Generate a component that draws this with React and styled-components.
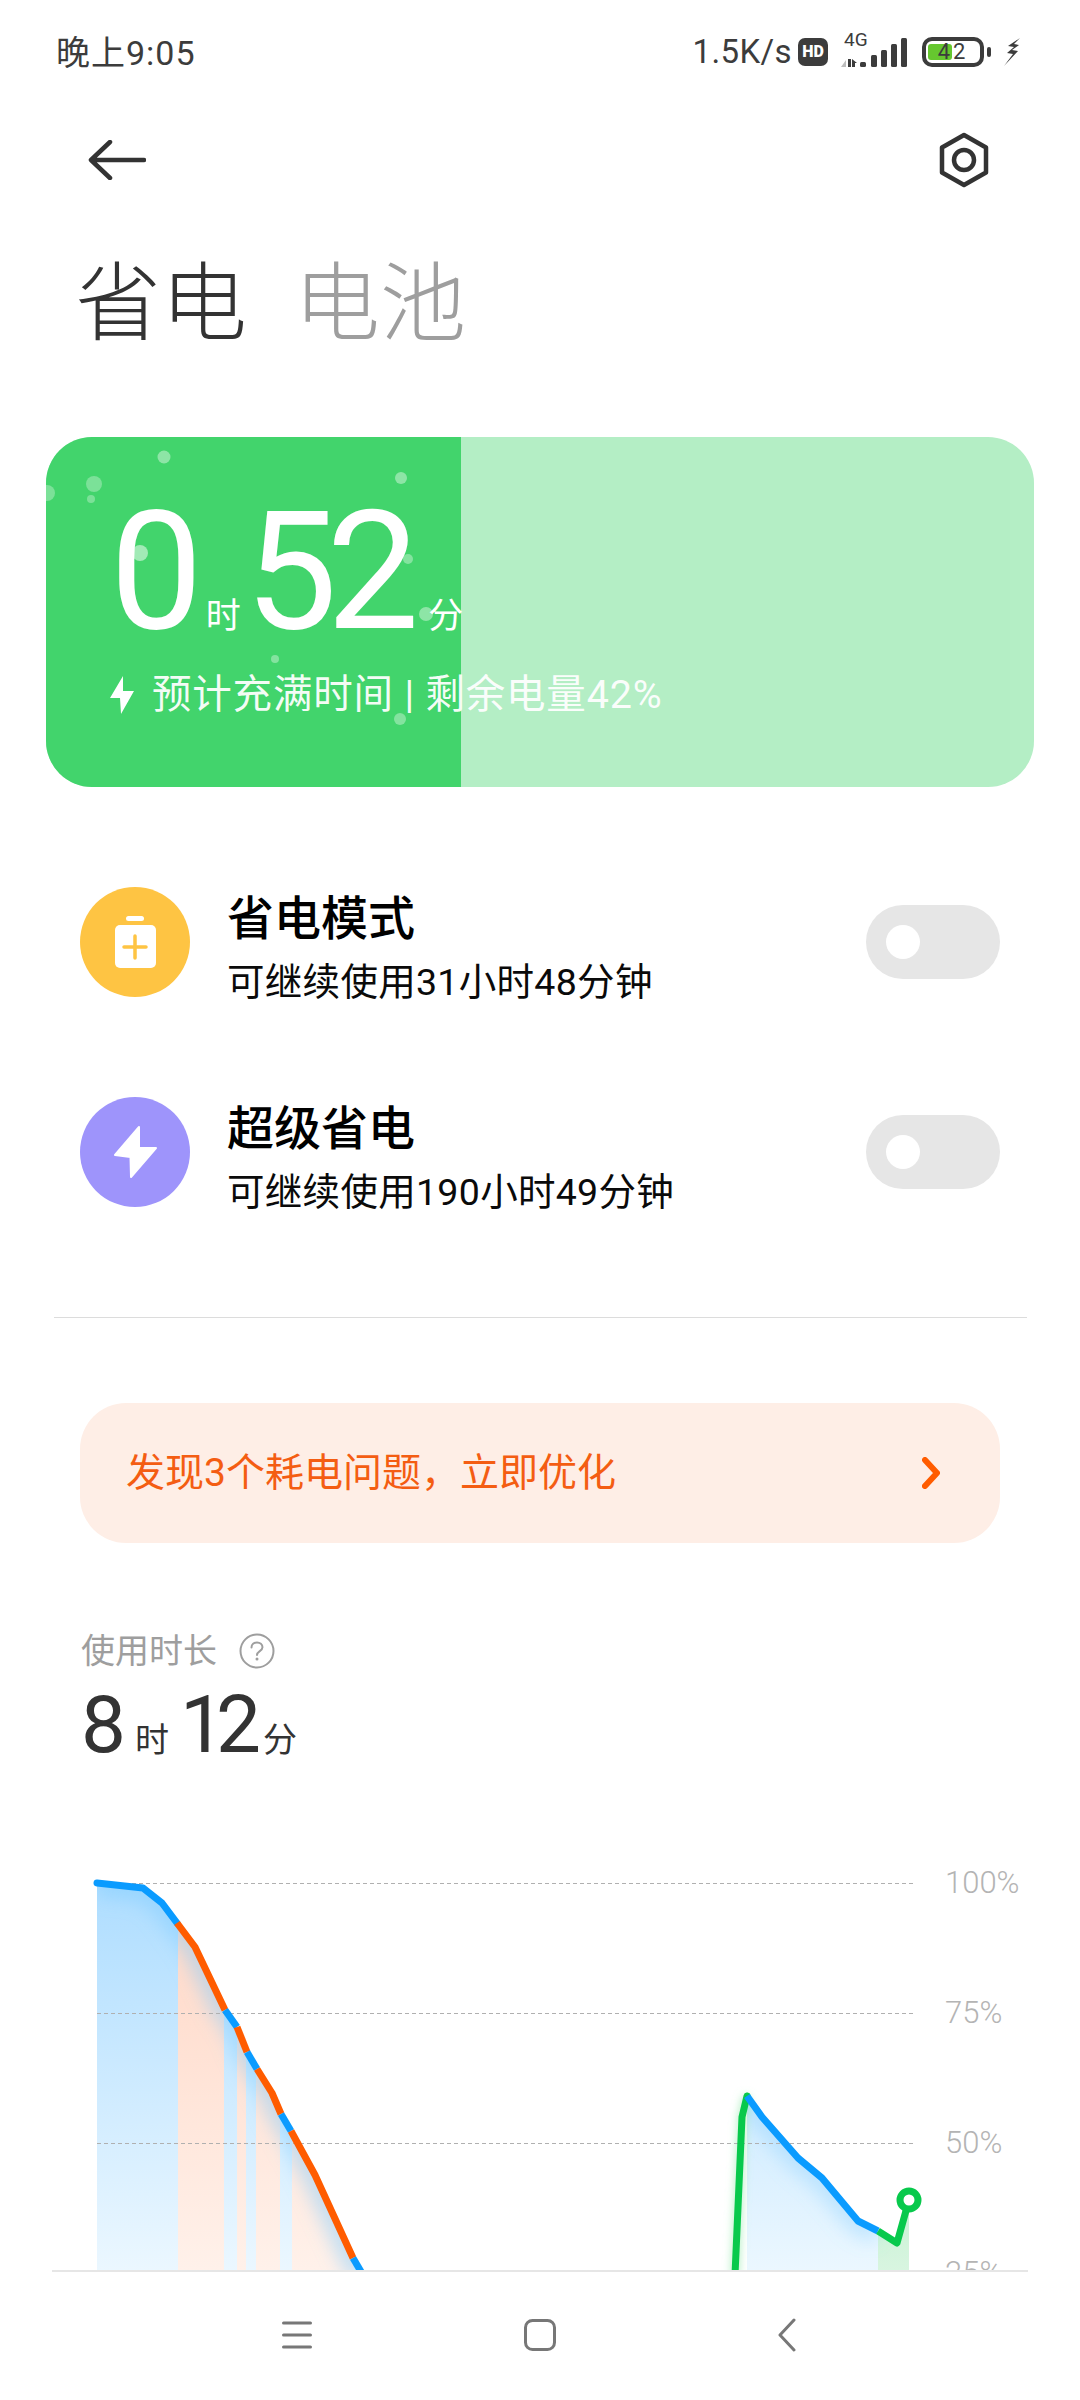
import React from 'react';
import styled, { createGlobalStyle } from 'styled-components';

const GlobalStyle = createGlobalStyle`
  html, body {
    margin: 0;
    padding: 0;
    background: #ffffff;
  }
  body {
    font-family: Roboto, "Noto Sans CJK SC", sans-serif;
  }
`;

const Page = styled.div`
  width: 1080px;
  height: 2400px;
  display: flex;
  flex-direction: column;
  overflow: hidden;
  background: #ffffff;
`;

const StatusBar = styled.div`
  height: 104px;
  flex: none;
  padding: 0 59px 0 56px;
  box-sizing: border-box;
  display: flex;
  align-items: center;
  justify-content: space-between;
  color: #3c3c3c;
`;

const StatusTime = styled.div`
  font-size: 34px;
  line-height: 40px;
  letter-spacing: 1px;
  padding-top: 2px;
`;

const StatusRight = styled.div`
  display: flex;
  align-items: center;
`;

const Speed = styled.span`
  font-size: 33px;
  line-height: 40px;
  letter-spacing: 0.4px;
`;

const HdBadge = styled.span`
  width: 30px;
  height: 28px;
  margin-left: 6px;
  border-radius: 7px;
  background: #3c3c3c;
  color: #ffffff;
  font-size: 16px;
  font-weight: 900;
  line-height: 28px;
  text-align: center;
`;

const Signal = styled.div`
  position: relative;
  width: 70px;
  height: 36px;
  margin: -6px 0 0 12px;
`;

const NetLabel = styled.span`
  position: absolute;
  left: 4px;
  top: -1px;
  font-size: 19px;
  line-height: 20px;
`;

const Battery = styled.div`
  position: relative;
  width: 62px;
  height: 30px;
  margin-left: 12px;
  box-sizing: border-box;
  border: 4px solid #3c3c3c;
  border-radius: 10px;
  display: flex;
  align-items: center;
  justify-content: center;

  &::after {
    content: '';
    position: absolute;
    right: -11px;
    top: 6px;
    width: 4px;
    height: 10px;
    border-radius: 2px;
    background: #3c3c3c;
  }
`;

const BatteryFill = styled.div`
  position: absolute;
  left: 2px;
  top: 3px;
  bottom: 3px;
  width: 24px;
  border-radius: 3px;
  background: #66c72f;
`;

const BatteryText = styled.span`
  position: relative;
  font-size: 22px;
  line-height: 22px;
  letter-spacing: 3px;
`;

const ChargeIcon = styled.svg`
  margin-left: 20px;
  display: block;
`;

const TopBar = styled.div`
  height: 112px;
  flex: none;
  padding: 0 90px 0 88px;
  display: flex;
  align-items: center;
  justify-content: space-between;
`;

const Tabs = styled.div`
  margin-top: 43px;
  padding-left: 75px;
  display: flex;
  gap: 47px;
  flex: none;
`;

const Tab = styled.div`
  font-size: 86px;
  line-height: 92px;
  font-weight: 300;
  color: ${(p) => (p.$active ? '#333333' : '#9e9e9e')};
`;

const ChargeCard = styled.div`
  position: relative;
  height: 350px;
  margin: 86px 46px 0;
  flex: none;
  border-radius: 46px;
  overflow: hidden;
  background: #b4eec5;
  color: #ffffff;
`;

const ChargeFill = styled.div`
  position: absolute;
  left: 0;
  top: 0;
  bottom: 0;
  width: 415px;
  background: #42d46c;
`;

const Bubbles = styled.svg`
  position: absolute;
  left: 0;
  top: 0;
`;

const ChargeContent = styled.div`
  position: relative;
  padding: 60px 0 0 64px;
  display: flex;
  flex-direction: column;
`;

const BigTime = styled.div`
  display: flex;
  align-items: baseline;
  height: 150px;
`;

const BigNumber = styled.span`
  font-size: 165px;
  line-height: 150px;
  letter-spacing: -11px;
`;

const BigUnit = styled.span`
  font-size: 35px;
  line-height: 40px;
  margin: 0 ${(p) => p.$right}px 0 ${(p) => p.$left}px;
`;

const ChargeInfo = styled.div`
  margin-top: 25px;
  display: flex;
  align-items: center;
  font-size: 39.5px;
  line-height: 46px;
  letter-spacing: 0.8px;
  white-space: nowrap;
  color: rgba(255, 255, 255, 0.95);
`;

const InfoBolt = styled.svg`
  margin-right: 18px;
  display: block;
`;

const ModeList = styled.div`
  margin-top: 50px;
  flex: none;
`;

const ModeRow = styled.div`
  height: 210px;
  padding: 0 80px;
  display: flex;
  align-items: center;
`;

const ModeIcon = styled.div`
  width: 110px;
  height: 110px;
  flex: none;
  border-radius: 50%;
  background: ${(p) => p.$color};
`;

const ModeText = styled.div`
  margin-left: 37px;
  padding-top: 12px;
  flex: 1;
`;

const ModeTitle = styled.div`
  font-size: 47px;
  line-height: 56px;
  font-weight: 500;
  color: #000000;
`;

const ModeSub = styled.div`
  margin-top: 12px;
  font-size: 37.5px;
  line-height: 46px;
  letter-spacing: 0.3px;
  color: #0a0a0a;
`;

const Toggle = styled.div`
  width: 134px;
  height: 74px;
  flex: none;
  border-radius: 37px;
  background: #e6e6e6;
  display: flex;
  align-items: center;
  padding-left: 20px;
  box-sizing: border-box;

  &::before {
    content: '';
    width: 34px;
    height: 34px;
    border-radius: 50%;
    background: #ffffff;
  }
`;

const Divider = styled.div`
  height: 1px;
  margin: 60px 53px 0 54px;
  flex: none;
  background: #dcdcdc;
`;

const AlertBar = styled.div`
  height: 140px;
  margin: 85px 80px 0;
  padding: 0 60px 0 46px;
  flex: none;
  border-radius: 46px;
  background: #feeee6;
  color: #f45d12;
  display: flex;
  align-items: center;
  justify-content: space-between;
  font-size: 39px;
  line-height: 46px;
`;

const UsageBlock = styled.div`
  margin-top: 86px;
  padding-left: 81px;
  flex: none;
`;

const UsageLabel = styled.div`
  display: flex;
  align-items: center;
  gap: 22px;
  font-size: 34px;
  line-height: 44px;
  color: #9e9e9e;
`;

const UsageTime = styled.div`
  margin-top: 16px;
  display: flex;
  align-items: baseline;
  color: #333333;
  height: 72px;
`;

const UsageNumber = styled.span`
  font-size: 80px;
  line-height: 72px;
  letter-spacing: -9px;
`;

const UsageUnit = styled.span`
  font-size: 34px;
  line-height: 40px;
  margin: 0 ${(p) => p.$right}px 0 ${(p) => p.$left}px;
`;

const ChartWrap = styled.div`
  flex: 1;
  min-height: 0;
  overflow: hidden;
  display: flex;
  margin-top: 102px;
`;

const ChartSvg = styled.svg`
  display: block;
  flex: none;
`;

const AxisLabels = styled.div`
  margin: 0 0 0 15px;
  display: flex;
  flex-direction: column;
  gap: 90px;
  font-size: 31px;
  line-height: 40px;
  font-weight: 300;
  color: #b4b4b4;
`;

const BottomNav = styled.div`
  height: 130px;
  flex: none;
  position: relative;
  display: flex;
  align-items: center;
  padding-left: 282px;
  gap: 212px;
  box-sizing: border-box;

  &::before {
    content: '';
    position: absolute;
    left: 52px;
    right: 52px;
    top: 0;
    height: 2px;
    background: #e6e6e6;
  }
`;

const NavIcon = styled.svg`
  display: block;
  flex: none;
  margin-left: ${(p) => p.$shift || 0}px;
`;

const BLUE = '#0a9bff';
const ORANGE = '#ff5c00';
const GREEN = '#08c94c';

// y of the chart svg starts at 1863 on the page
const Y0 = 1863;
const pt = (x, y) => `${x},${y - Y0}`;

const segments = [
  { color: BLUE, points: [[97, 1883], [143, 1888], [162, 1903], [177, 1923]] },
  { color: ORANGE, points: [[177, 1923], [195, 1947], [225, 2010]] },
  { color: BLUE, points: [[225, 2010], [237, 2027]] },
  { color: ORANGE, points: [[237, 2027], [247, 2052]] },
  { color: BLUE, points: [[247, 2052], [257, 2069]] },
  { color: ORANGE, points: [[257, 2069], [272, 2093], [281, 2114]] },
  { color: BLUE, points: [[281, 2114], [291, 2131]] },
  { color: ORANGE, points: [[291, 2131], [315, 2175], [353, 2258]] },
  { color: BLUE, points: [[353, 2258], [363, 2275]] },
  { color: GREEN, points: [[735, 2275], [742, 2117], [747, 2096]] },
  { color: BLUE, points: [[747, 2096], [762, 2117], [798, 2158], [822, 2178], [858, 2221], [878, 2231]] },
  { color: GREEN, points: [[878, 2231], [897, 2243], [909, 2200]] },
];

const bands = [
  [97, 178, 'blue'],
  [178, 224, 'orange'],
  [224, 237, 'blue'],
  [237, 246, 'orange'],
  [246, 256, 'blue'],
  [256, 280, 'orange'],
  [280, 292, 'blue'],
  [292, 353, 'orange'],
  [353, 363, 'blue'],
  [747, 878, 'blue'],
  [878, 909, 'green'],
];

const curveOne = segments.slice(0, 9).flatMap((s) => s.points);
const curveTwo = segments.slice(10, 12).flatMap((s) => s.points);
const areaOne = [...curveOne, [363, 2275], [97, 2275]].map((p) => pt(p[0], p[1])).join(' ');
const areaTwo = [[747, 2275], ...curveTwo, [909, 2275]].map((p) => pt(p[0], p[1])).join(' ');
const polyline = (points) => points.map((p) => pt(p[0], p[1])).join(' ');

const UsageChart = () => (
  <ChartSvg width="930" height="407" viewBox="0 0 930 407">
    <defs>
      <linearGradient id="fillBlue" gradientUnits="userSpaceOnUse" x1="0" y1="20" x2="0" y2="407">
        <stop offset="0" stopColor="#aeddff" />
        <stop offset="1" stopColor="#ebf7ff" />
      </linearGradient>
      <linearGradient id="fillOrange" gradientUnits="userSpaceOnUse" x1="0" y1="20" x2="0" y2="407">
        <stop offset="0" stopColor="#ffd6c4" />
        <stop offset="1" stopColor="#fff1ea" />
      </linearGradient>
      <linearGradient id="fillGreen" gradientUnits="userSpaceOnUse" x1="0" y1="340" x2="0" y2="407">
        <stop offset="0" stopColor="#c8f2d4" />
        <stop offset="1" stopColor="#d8f5e0" />
      </linearGradient>
      <clipPath id="underOne"><polygon points={areaOne} /></clipPath>
      <clipPath id="underTwo"><polygon points={areaTwo} /></clipPath>
      <filter id="soft" x="-20%" y="-20%" width="140%" height="140%">
        <feGaussianBlur stdDeviation="9" />
      </filter>
      <filter id="glow" x="-200%" y="-20%" width="500%" height="140%">
        <feGaussianBlur stdDeviation="4" />
      </filter>
    </defs>

    <g clipPath="url(#underOne)">
      {bands.slice(0, 9).map(([a, b, kind]) => (
        <rect key={a} x={a} y="0" width={b - a} height="407" fill={kind === 'blue' ? 'url(#fillBlue)' : 'url(#fillOrange)'} />
      ))}
      <polyline points={polyline(curveOne)} fill="none" stroke="#7ccbff" strokeOpacity="0.45" strokeWidth="26" filter="url(#soft)" />
    </g>
    <g clipPath="url(#underTwo)">
      {bands.slice(9).map(([a, b, kind]) => (
        <rect key={a} x={a} y="0" width={b - a} height="407" fill={kind === 'blue' ? 'url(#fillBlue)' : 'url(#fillGreen)'} />
      ))}
      <polyline points={polyline(segments[10].points)} fill="none" stroke="#7ccbff" strokeOpacity="0.35" strokeWidth="26" filter="url(#soft)" />
    </g>
    <polyline points={polyline(segments[9].points)} fill="none" stroke="#8fe8a8" strokeOpacity="0.7" strokeWidth="8" filter="url(#glow)" />

    {[1883, 2013, 2143].map((y) => (
      <line key={y} x1="97" x2="913" y1={y - Y0 + 0.5} y2={y - Y0 + 0.5} stroke="#b0b0b0" strokeWidth="1" strokeDasharray="4 3" />
    ))}

    {segments.map((s, i) => (
      <polyline
        key={i}
        points={polyline(s.points)}
        fill="none"
        stroke={s.color}
        strokeWidth="7"
        strokeLinejoin="round"
        strokeLinecap={i === 0 || i === 9 ? 'round' : 'butt'}
      />
    ))}
    <circle cx="909" cy={2200 - Y0} r="9" fill="#ffffff" stroke={GREEN} strokeWidth="7" />
  </ChartSvg>
);

const signalBars = [
  [20, 31, 5],
  [31, 24, 12],
  [41, 19, 17],
  [51, 13, 23],
  [61, 7, 29],
];

const App = () => (
  <Page>
    <GlobalStyle />
    <StatusBar>
      <StatusTime>晚上9:05</StatusTime>
      <StatusRight>
        <Speed>1.5K/s</Speed>
        <HdBadge>HD</HdBadge>
        <Signal>
          <NetLabel>4G</NetLabel>
          <svg width="70" height="36" viewBox="0 0 70 36">
            <path d="M6 36V29L1 36Z" fill="#bdbdbd" />
            <path d="M8 36V28h3V36Z" fill="#3c3c3c" />
            <path d="M12 36V28l5 4h-2v4Z" fill="#3c3c3c" />
            {signalBars.map(([x, y, h]) => (
              <rect key={x} x={x} y={y} width="6" height={h} rx="1.500" fill="#3c3c3c" />
            ))}
          </svg>
        </Signal>
        <Battery>
          <BatteryFill />
          <BatteryText>42</BatteryText>
        </Battery>
        <ChargeIcon width="17" height="28" viewBox="0 0 17 28">
          <path d="M16 0 4 8l6 1-7 6 6 1L0 28 14 13l-6-1 7-5-5-1Z" fill="#3c3c3c" />
        </ChargeIcon>
      </StatusRight>
    </StatusBar>

    <TopBar>
      <svg width="58" height="40" viewBox="0 0 58 40">
        <path d="M56 20H3M22 2 3 20l19 18" fill="none" stroke="#333333" strokeWidth="4.500" strokeLinecap="round" strokeLinejoin="round" />
      </svg>
      <svg width="52" height="56" viewBox="0 0 52 56">
        <path d="M26 3 48 15.500V40.500L26 53 4 40.500V15.500Z" fill="none" stroke="#333333" strokeWidth="4.500" strokeLinejoin="round" />
        <circle cx="26" cy="28" r="10" fill="none" stroke="#333333" strokeWidth="4.500" />
      </svg>
    </TopBar>

    <Tabs>
      <Tab $active>省电</Tab>
      <Tab>电池</Tab>
    </Tabs>

    <ChargeCard>
      <ChargeFill />
      <Bubbles width="415" height="350" viewBox="0 0 415 350">
        <circle cx="118" cy="20" r="6.500" fill="#ffffff" fillOpacity="0.4" />
        <circle cx="48" cy="47" r="8" fill="#ffffff" fillOpacity="0.3" />
        <circle cx="1" cy="56" r="8" fill="#ffffff" fillOpacity="0.3" />
        <circle cx="45" cy="62" r="4" fill="#ffffff" fillOpacity="0.3" />
        <circle cx="355" cy="41" r="6" fill="#ffffff" fillOpacity="0.4" />
        <circle cx="94" cy="116" r="8" fill="#ffffff" fillOpacity="0.5" />
        <circle cx="362" cy="122" r="5" fill="#ffffff" fillOpacity="0.35" />
        <circle cx="380" cy="177" r="7" fill="#ffffff" fillOpacity="0.4" />
        <circle cx="229" cy="222" r="4" fill="#ffffff" fillOpacity="0.35" />
        <circle cx="354" cy="282" r="6" fill="#ffffff" fillOpacity="0.35" />
      </Bubbles>
      <ChargeContent>
        <BigTime>
          <BigNumber>0</BigNumber>
          <BigUnit $left={14} $right={4}>时</BigUnit>
          <BigNumber>52</BigNumber>
          <BigUnit $left={20} $right={0}>分</BigUnit>
        </BigTime>
        <ChargeInfo>
          <InfoBolt width="24" height="38" viewBox="0 0 24 38">
            <path d="M13 0 0 22h10l1 16L24 15H13Z" fill="#ffffff" />
          </InfoBolt>
          预计充满时间 | 剩余电量42%
        </ChargeInfo>
      </ChargeContent>
    </ChargeCard>

    <ModeList>
      <ModeRow>
        <ModeIcon $color="#fec443">
          <svg width="110" height="110" viewBox="0 0 110 110">
            <rect x="46" y="29" width="18" height="5" rx="2.500" fill="#ffffff" />
            <rect x="35" y="38" width="41" height="43" rx="5" fill="#ffffff" />
            <path d="M55 49V71M44 60H66" stroke="#fec443" strokeWidth="3.500" strokeLinecap="round" />
          </svg>
        </ModeIcon>
        <ModeText>
          <ModeTitle>省电模式</ModeTitle>
          <ModeSub>可继续使用31小时48分钟</ModeSub>
        </ModeText>
        <Toggle />
      </ModeRow>
      <ModeRow>
        <ModeIcon $color="#9e94fb">
          <svg width="110" height="110" viewBox="0 0 110 110">
            <path d="M59 30 35 58 50.500 60 51 80 76 51 59 51Z" fill="#ffffff" stroke="#ffffff" strokeWidth="2" strokeLinejoin="round" />
          </svg>
        </ModeIcon>
        <ModeText>
          <ModeTitle>超级省电</ModeTitle>
          <ModeSub>可继续使用190小时49分钟</ModeSub>
        </ModeText>
        <Toggle />
      </ModeRow>
    </ModeList>

    <Divider />

    <AlertBar>
      发现3个耗电问题，立即优化
      <svg width="18" height="32" viewBox="0 0 18 32">
        <path d="M3 3 15 16 3 29" fill="none" stroke="#ff5c00" strokeWidth="6" strokeLinecap="round" strokeLinejoin="round" />
      </svg>
    </AlertBar>

    <UsageBlock>
      <UsageLabel>
        使用时长
        <svg width="36" height="36" viewBox="0 0 36 36">
          <circle cx="18" cy="18" r="16.500" fill="none" stroke="#9e9e9e" strokeWidth="2" />
          <path d="M12.500 14.500c0-3 2.500-5 5.500-5s5.500 2 5.500 4.800c0 3.700-5.500 3.900-5.500 7.700" fill="none" stroke="#9e9e9e" strokeWidth="2" strokeLinecap="round" />
          <circle cx="18" cy="26" r="1.500" fill="#9e9e9e" />
        </svg>
      </UsageLabel>
      <UsageTime>
        <UsageNumber>8</UsageNumber>
        <UsageUnit $left={18} $right={11}>时</UsageUnit>
        <UsageNumber>12</UsageNumber>
        <UsageUnit $left={11} $right={0}>分</UsageUnit>
      </UsageTime>
    </UsageBlock>

    <ChartWrap>
      <UsageChart />
      <AxisLabels>
        <span>100%</span>
        <span>75%</span>
        <span>50%</span>
        <span>25%</span>
      </AxisLabels>
    </ChartWrap>

    <BottomNav>
      <NavIcon width="30" height="30" viewBox="0 0 30 30">
        <path d="M1.500 3H28.500M1.500 15H28.500M1.500 27H28.500" stroke="#777777" strokeWidth="3" strokeLinecap="round" />
      </NavIcon>
      <NavIcon width="32" height="32" viewBox="0 0 32 32">
        <rect x="1.500" y="1.500" width="29" height="29" rx="7" fill="none" stroke="#777777" strokeWidth="3" />
      </NavIcon>
      <NavIcon $shift={10} width="18" height="34" viewBox="0 0 18 34">
        <path d="M16 2 2 17l14 15" fill="none" stroke="#777777" strokeWidth="3" strokeLinecap="round" strokeLinejoin="round" />
      </NavIcon>
    </BottomNav>
  </Page>
);

export default App;
